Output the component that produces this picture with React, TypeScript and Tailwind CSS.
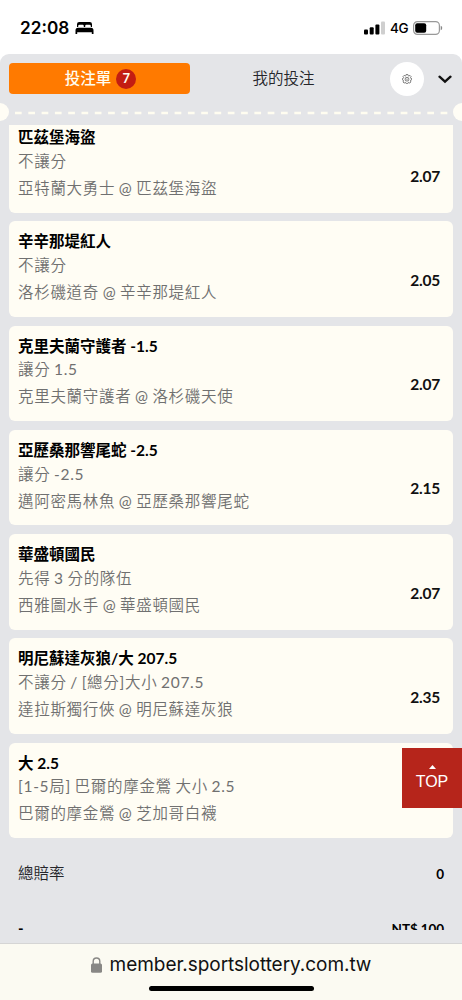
import React from "react";

type Bet = { title: string; market: string; match: string; odds?: string };

const bets: Bet[] = [
  { title: "匹茲堡海盜", market: "不讓分", match: "亞特蘭大勇士 @ 匹茲堡海盜", odds: "2.07" },
  { title: "辛辛那堤紅人", market: "不讓分", match: "洛杉磯道奇 @ 辛辛那堤紅人", odds: "2.05" },
  { title: "克里夫蘭守護者 -1.5", market: "讓分 1.5", match: "克里夫蘭守護者 @ 洛杉磯天使", odds: "2.07" },
  { title: "亞歷桑那響尾蛇 -2.5", market: "讓分 -2.5", match: "邁阿密馬林魚 @ 亞歷桑那響尾蛇", odds: "2.15" },
  { title: "華盛頓國民", market: "先得 3 分的隊伍", match: "西雅圖水手 @ 華盛頓國民", odds: "2.07" },
  { title: "明尼蘇達灰狼/大 207.5", market: "不讓分 / [總分]大小 207.5", match: "達拉斯獨行俠 @ 明尼蘇達灰狼", odds: "2.35" },
  { title: "大 2.5", market: "[1-5局] 巴爾的摩金鶯 大小 2.5", match: "巴爾的摩金鶯 @ 芝加哥白襪" },
];

function StatusBar() {
  return (
    <header className="flex h-[53.5px] shrink-0 items-start justify-between bg-white pl-5 pr-[19px] pt-[18px] font-['Inter','Liberation_Sans',sans-serif] text-black">
      <div className="flex h-5 items-center gap-[6px]">
        <span className="text-[17.200px] font-semibold leading-5">22:08</span>
        <svg width="19" height="14" viewBox="0 0 19 14" className="block">
          <path d="M2 6V3.2Q2 1 4.2 1h10.6Q17 1 17 3.2V6h-1.2V5q0-1.2-1.3-1.2h-3.2Q10.200 3.800 10.200 5v1H8.800V5q0-1.200-1.200-1.200H4.500Q3.200 3.800 3.200 5v1Z" />
          <path d="M.5 9.500Q.5 6.700 3 6.700h13q2.500 0 2.500 2.800v3.500h-1.700v-1.700H2.200V13H.5Z" />
        </svg>
      </div>
      <div className="flex h-5 items-center">
        <svg width="21" height="14" viewBox="0 0 21 14" className="block">
          <rect x="0" y="8.500" width="4" height="5" rx="1" />
          <rect x="5.700" y="6.300" width="4" height="7.200" rx="1" />
          <rect x="11.400" y="3.500" width="4" height="10" rx="1" />
          <rect x="17" y="0.500" width="4" height="13" rx="1" fill="#cfcfcf" />
        </svg>
        <span className="ml-[5px] w-[18px] text-[13.500px] font-medium leading-5 tracking-[-0.4px]">4G</span>
        <svg width="30" height="14" viewBox="0 0 30 14" className="ml-[5px] block">
          <rect x="0.600" y="0.600" width="25.800" height="12.800" rx="3.800" fill="none" stroke="#999" strokeWidth="1.200" />
          <rect x="2.200" y="2.200" width="11" height="9.600" rx="2" />
          <path d="M27.700 4.800q2 .8 1.500 2.500q0 1.500-1.500 2Z" fill="#888" />
        </svg>
      </div>
    </header>
  );
}

function Tabs() {
  return (
    <nav className="flex h-[50px] shrink-0 items-center pl-[9px] pr-[9px]">
      <button className="flex h-[31.500px] w-[181px] items-center justify-center gap-[5px] rounded-[4px] bg-[#ff7a00] pl-[2px] text-[15.500px] font-medium leading-5 text-[#fffdf0]">
        <span className="-mt-[2px]">投注單</span>
        <span className="flex size-5 items-center justify-center rounded-full bg-[#c31d12] text-[13px] font-bold leading-none">7</span>
      </button>
      <button className="-mt-[2px] w-[187px] text-center font-['Lato','Noto_Sans_CJK_TC_DemiLight','Noto_Sans_CJK_TC',sans-serif] text-[15.500px] leading-5 text-[#25262a]">我的投注</button>
      <span className="ml-[13px] flex size-[34px] items-center justify-center rounded-full bg-white">
        <svg width="10" height="10" viewBox="0 0 20 20" fill="none" stroke="#555" strokeWidth="1.500">
          <path d="m8.300 1h3.400l.7 2.500 1.300.6L16 2.800l2.200 2.300L17 7.400l.5 1.200 2 .6v2.500l-2.200.7-.6 1.300 1.200 2.200-2.300 2.200-2.200-1.300-1.400.6-.6 2.200H8.500l-.6-2.200-1.300-.6-2.300 1.300L2 15.900l1.200-2.200-.6-1.300L.7 11.700V9.200l2-.7.6-1.400-1.200-2.200L4.300 2.700l2.200 1.300 1.300-.6Z" />
          <circle cx="10" cy="10.400" r="3.800" />
          <path d="M10 9v3" />
        </svg>
      </span>
      <svg width="14" height="9" viewBox="0 0 14 9" fill="none" stroke="#111" strokeWidth="2.300" strokeLinecap="round" className="ml-[14px] mt-[2px]">
        <path d="m1.500 1.700 5.500 5 5.500-5" />
      </svg>
    </nav>
  );
}

function Perforation() {
  return (
    <div className="flex h-[21.500px] shrink-0 items-start justify-between">
      <span className="-mt-px h-[18px] w-[9px] rounded-r-full bg-[#fffdf5]" />
      <svg width="440" height="18" viewBox="0 0 440 18" className="shrink-0">
        <path d="M4 9h436" stroke="#fffdf0" strokeWidth="2.400" strokeDasharray="6.700 6.600" />
      </svg>
      <span className="-mt-px h-[18px] w-[9px] rounded-l-full bg-[#fffdf5]" />
    </div>
  );
}

function BetCard({ bet }: { bet: Bet }) {
  return (
    <article className="flex h-[95.500px] shrink-0 justify-between rounded-[6px] bg-[#fffdf4] pl-[9px] pr-[13px] pt-[8px]">
      <div className="whitespace-nowrap">
        <h2 className="text-[15.500px] font-bold leading-6 text-black">{bet.title}</h2>
        <p className="mt-[0.700px] font-['Lato','Noto_Sans_CJK_TC_DemiLight','Noto_Sans_CJK_TC',sans-serif] text-[15.500px] leading-[23px] tracking-[0.7px] text-[#707070] [word-spacing:-1px]">{bet.market}</p>
        <p className="font-['Lato','Noto_Sans_CJK_TC_DemiLight','Noto_Sans_CJK_TC',sans-serif] text-[15.500px] leading-[31px] tracking-[0.7px] text-[#707070] [word-spacing:-1px]">{bet.match}</p>
      </div>
      {bet.odds && <strong className="mt-[40.500px] text-[15.500px] font-bold leading-5 tracking-[-0.2px] text-[#111]">{bet.odds}</strong>}
    </article>
  );
}

export default function App() {
  return (
    <div className="relative flex h-[1000px] w-[462px] flex-col overflow-hidden bg-white font-['Lato','Noto_Sans_CJK_TC',sans-serif]">
      <StatusBar />
      <main className="flex h-[889px] shrink-0 flex-col rounded-t-[9px] bg-[#e4e5e8]">
        <Tabs />
        <Perforation />
        <section className="h-[804.500px] shrink-0 overflow-hidden px-[9px]">
          <div className="-mt-[8px] flex flex-col gap-[8.800px]">
            {bets.map((bet) => (
              <BetCard key={bet.title} bet={bet} />
            ))}
          </div>
          <div className="mt-[24px] flex h-[22px] items-center justify-between pl-[9px] pr-[9px]">
            <span className="font-['Lato','Noto_Sans_CJK_TC_DemiLight','Noto_Sans_CJK_TC',sans-serif] text-[15.500px] text-[#25262a]">總賠率</span>
            <strong className="mt-[2px] text-[13.500px] font-bold text-black">0</strong>
          </div>
          <div className="mt-[33px] flex h-[22px] items-center justify-between pl-[9px] pr-[9px] font-bold text-black">
            <span className="text-[15px]">-</span>
            <span className="mt-px text-[13.500px] tracking-[-0.1px]">NT$ 100</span>
          </div>
        </section>
      </main>
      <footer className="flex h-[57.500px] shrink-0 flex-col items-center border-t border-[#d5d5d5] bg-[#fbfaf2] font-['Inter','Liberation_Sans',sans-serif]">
        <div className="mt-[9.500px] flex h-6 items-center gap-[8px]">
          <svg width="11" height="16" viewBox="0 0 11 16">
            <path d="M2.200 8V4.300a3.300 3.300 0 0 1 6.600 0V8" fill="none" stroke="#888785" strokeWidth="1.400" />
            <rect x="0" y="6.500" width="11" height="9.200" rx="1.500" fill="#888785" />
          </svg>
          <span className="text-[19px] leading-6 tracking-[-0.050px] text-[#111]">member.sportslottery.com.tw</span>
        </div>
        <div className="mt-[8.500px] h-[5.500px] w-[165px] rounded-full bg-black" />
      </footer>
      <button className="absolute right-0 top-[748px] flex h-[60px] w-[60px] flex-col items-center bg-[#b6251b] pt-[17px] font-['Liberation_Sans',sans-serif] text-white">
        <svg width="7" height="4" viewBox="0 0 7 4" fill="currentColor">
          <path d="M0 4 3.500 0 7 4Z" />
        </svg>
        <span className="mt-[3px] text-[16px] leading-5">TOP</span>
      </button>
    </div>
  );
}
